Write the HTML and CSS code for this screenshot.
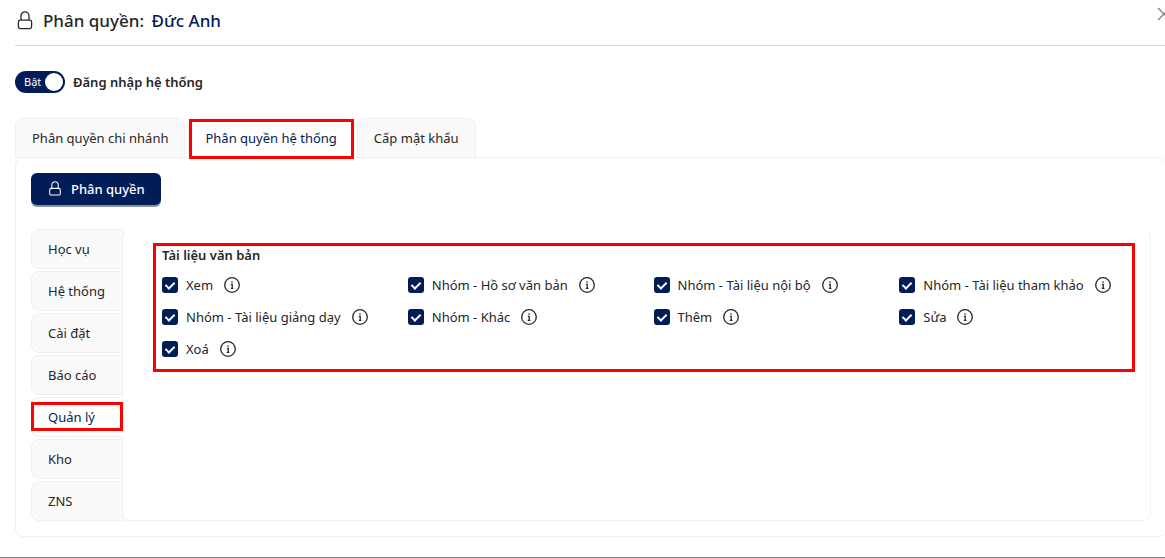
FILE: index.html
```html
<!DOCTYPE html>
<html lang="vi">
<head>
<meta charset="utf-8">
<title>Phân quyền</title>
<link rel="stylesheet" href="styles.css">
</head>
<body>
<svg class="symbols" aria-hidden="true">
  <symbol id="lock" viewBox="0 0 16 20">
    <rect x="1.4" y="9.2" width="13.2" height="8.4" rx="1.8"/>
    <path d="M4 9V4.9a4 4 0 0 1 8 0V9"/>
  </symbol>
  <symbol id="info" viewBox="0 0 16 16">
    <circle cx="8" cy="8" r="7.3"/>
    <path d="M8 4.3v1.4M6.9 7.3H8.2v4M6.8 11.4h2.6"/>
  </symbol>
</svg>
<div class="page">
  <header class="header">
    <svg class="lock"><use href="#lock"/></svg>
    <h1 class="title">Phân quyền: <span class="name">Đức Anh</span></h1>
    <button class="close" type="button" aria-label="Đóng"><svg viewBox="0 0 14 14"><path d="M1 1l12 12M13 1L1 13"/></svg></button>
  </header>

  <main class="main">
    <div class="login">
      <label class="switch"><input type="checkbox" id="login" checked><span>Bật</span></label>
      <label class="login-label" for="login">Đăng nhập hệ thống</label>
    </div>

    <nav class="tabs">
      <button class="tab" type="button">Phân quyền chi nhánh</button>
      <button class="tab tab-active" type="button">Phân quyền hệ thống</button>
      <button class="tab" type="button">Cấp mật khẩu</button>
    </nav>

    <section class="panel">
      <button class="primary" type="button"><svg class="lock"><use href="#lock"/></svg>Phân quyền</button>
      <div class="groups">
        <nav class="side">
          <button class="side-tab" type="button">Học vụ</button>
          <button class="side-tab" type="button">Hệ thống</button>
          <button class="side-tab" type="button">Cài đặt</button>
          <button class="side-tab" type="button">Báo cáo</button>
          <button class="side-tab side-active" type="button">Quản lý</button>
          <button class="side-tab" type="button">Kho</button>
          <button class="side-tab" type="button">ZNS</button>
        </nav>
        <div class="content">
          <div class="permissions">
            <h2 class="group-title">Tài liệu văn bản</h2>
            <div class="grid">
              <div class="item"><label><input type="checkbox" checked>Xem</label><svg class="info"><use href="#info"/></svg></div>
              <div class="item"><label><input type="checkbox" checked>Nhóm - Hồ sơ văn bản</label><svg class="info"><use href="#info"/></svg></div>
              <div class="item"><label><input type="checkbox" checked>Nhóm - Tài liệu nội bộ</label><svg class="info"><use href="#info"/></svg></div>
              <div class="item"><label><input type="checkbox" checked>Nhóm - Tài liệu tham khảo</label><svg class="info"><use href="#info"/></svg></div>
              <div class="item"><label><input type="checkbox" checked>Nhóm - Tài liệu giảng dạy</label><svg class="info"><use href="#info"/></svg></div>
              <div class="item"><label><input type="checkbox" checked>Nhóm - Khác</label><svg class="info"><use href="#info"/></svg></div>
              <div class="item"><label><input type="checkbox" checked>Thêm</label><svg class="info"><use href="#info"/></svg></div>
              <div class="item"><label><input type="checkbox" checked>Sửa</label><svg class="info"><use href="#info"/></svg></div>
              <div class="item"><label><input type="checkbox" checked>Xoá</label><svg class="info"><use href="#info"/></svg></div>
            </div>
          </div>
        </div>
      </div>
    </section>
  </main>
</div>
</body>
</html>
```
FILE: styles.css
```css
:root {
  --navy: #001d57;
  --text: #262626;
  --line: #f0f0f0;
  --mark: #ff0000;
}

* { box-sizing: border-box; }

body {
  margin: 0;
  background: #fff;
  color: var(--text);
  font: 13px/22px "Noto Sans", "Open Sans", sans-serif;
}

button {
  font: inherit;
  color: inherit;
  white-space: nowrap;
  cursor: pointer;
}

svg {
  fill: none;
  stroke: currentColor;
  stroke-width: 1.3;
}

.symbols { display: none; }

.page {
  min-height: 100vh;
  padding: 0 0 20px 15px;
  border-bottom: 1px solid #7f7f7f;
  overflow: hidden;
}

.header {
  display: flex;
  align-items: center;
  gap: 8px;
  height: 46px;
  padding-bottom: 4px;
  border-bottom: 1px solid #d9d9d9;
}

.lock {
  flex: none;
  width: 20px;
  height: 20px;
}

.title {
  margin: 0;
  font-size: 17px;
  font-weight: 500;
}

.name {
  margin-left: 3px;
  color: var(--navy);
}

.close {
  width: 14px;
  height: 14px;
  margin: 0 -6px 14px auto;
  padding: 0;
  border: 0;
  background: none;
  color: #808080;
}

.close svg {
  display: block;
  width: 14px;
  height: 14px;
}

.main { margin-right: -2px; }

.login {
  display: flex;
  align-items: center;
  gap: 8px;
  padding: 25px 0;
}

.switch {
  display: flex;
  align-items: center;
  position: relative;
  width: 50px;
  height: 22px;
  padding-left: 9px;
  border-radius: 11px;
  background: var(--navy);
  color: #fff;
  font-size: 11px;
}

.switch input {
  position: absolute;
  inset: 0;
  margin: 0;
  appearance: none;
}

.switch::after {
  content: "";
  position: absolute;
  top: 2px;
  right: 2px;
  width: 18px;
  height: 18px;
  border-radius: 50%;
  background: #fff;
}

.login-label,
.group-title { font-weight: 600; }

.tabs {
  display: flex;
  gap: 3px;
}

.tab {
  height: 40px;
  margin-bottom: -1px;
  padding: 0 16px;
  border: 1px solid var(--line);
  border-radius: 8px 8px 0 0;
  background: #fafafa;
}

.tab-active,
.side-active {
  position: relative;
  color: var(--navy);
}

.tab.tab-active {
  border-bottom-color: #fff;
  background: #fff;
}

.tab-active::after,
.side-active::after,
.permissions::after {
  content: "";
  position: absolute;
  border: 3px solid var(--mark);
  pointer-events: none;
}

.tab-active::after { inset: 0 -1px -2px 0; }

.panel {
  padding: 15px;
  border: 1px solid var(--line);
  border-radius: 8px;
}

.primary {
  display: flex;
  align-items: center;
  gap: 6px;
  height: 32px;
  margin-bottom: 24px;
  padding: 0 16px 0 14px;
  border: 0;
  border-radius: 6px;
  background: var(--navy);
  box-shadow: 0 2px 0 #8a919e;
  color: #fff;
  font-weight: 500;
}

.primary .lock { height: 16px; }

.groups { display: flex; }

.side {
  display: flex;
  flex-direction: column;
  gap: 2px;
  width: 92px;
  z-index: 1;
}

.side-tab {
  height: 40px;
  padding: 0 16px;
  border: 1px solid var(--line);
  border-radius: 8px 0 0 8px;
  background: #fafafa;
  text-align: left;
}

.side-tab.side-active {
  border-right-color: #fff;
  background: #fff;
}

.side-active::after { inset: 4px -1px 5px -1px; }

.content {
  flex: 1;
  margin-left: -1px;
  padding: 13px 5px 0 30px;
  border: 1px solid var(--line);
  border-top-color: transparent;
  border-radius: 8px;
}

.permissions {
  position: relative;
  padding: 1px 0 7px 9px;
}

.permissions::after { inset: 0 10px 0 0; }

.group-title {
  margin: 0 0 3px;
  font-size: 13px;
  line-height: 22px;
}

.grid {
  display: grid;
  grid-template-columns: repeat(4, 1fr);
}

.item {
  display: flex;
  align-items: center;
  gap: 11px;
  height: 32px;
}

.item label {
  display: flex;
  align-items: center;
  gap: 8px;
  white-space: nowrap;
}

.item input {
  display: grid;
  place-items: center;
  width: 16px;
  height: 16px;
  margin: 0;
  appearance: none;
  border-radius: 3px;
  background: var(--navy);
}

.item input:checked::after {
  content: "";
  width: 4px;
  height: 7px;
  margin-bottom: 2px;
  border: solid #fff;
  border-width: 0 2px 2px 0;
  transform: rotate(45deg);
}

.info {
  flex: none;
  width: 16px;
  height: 16px;
}
```
